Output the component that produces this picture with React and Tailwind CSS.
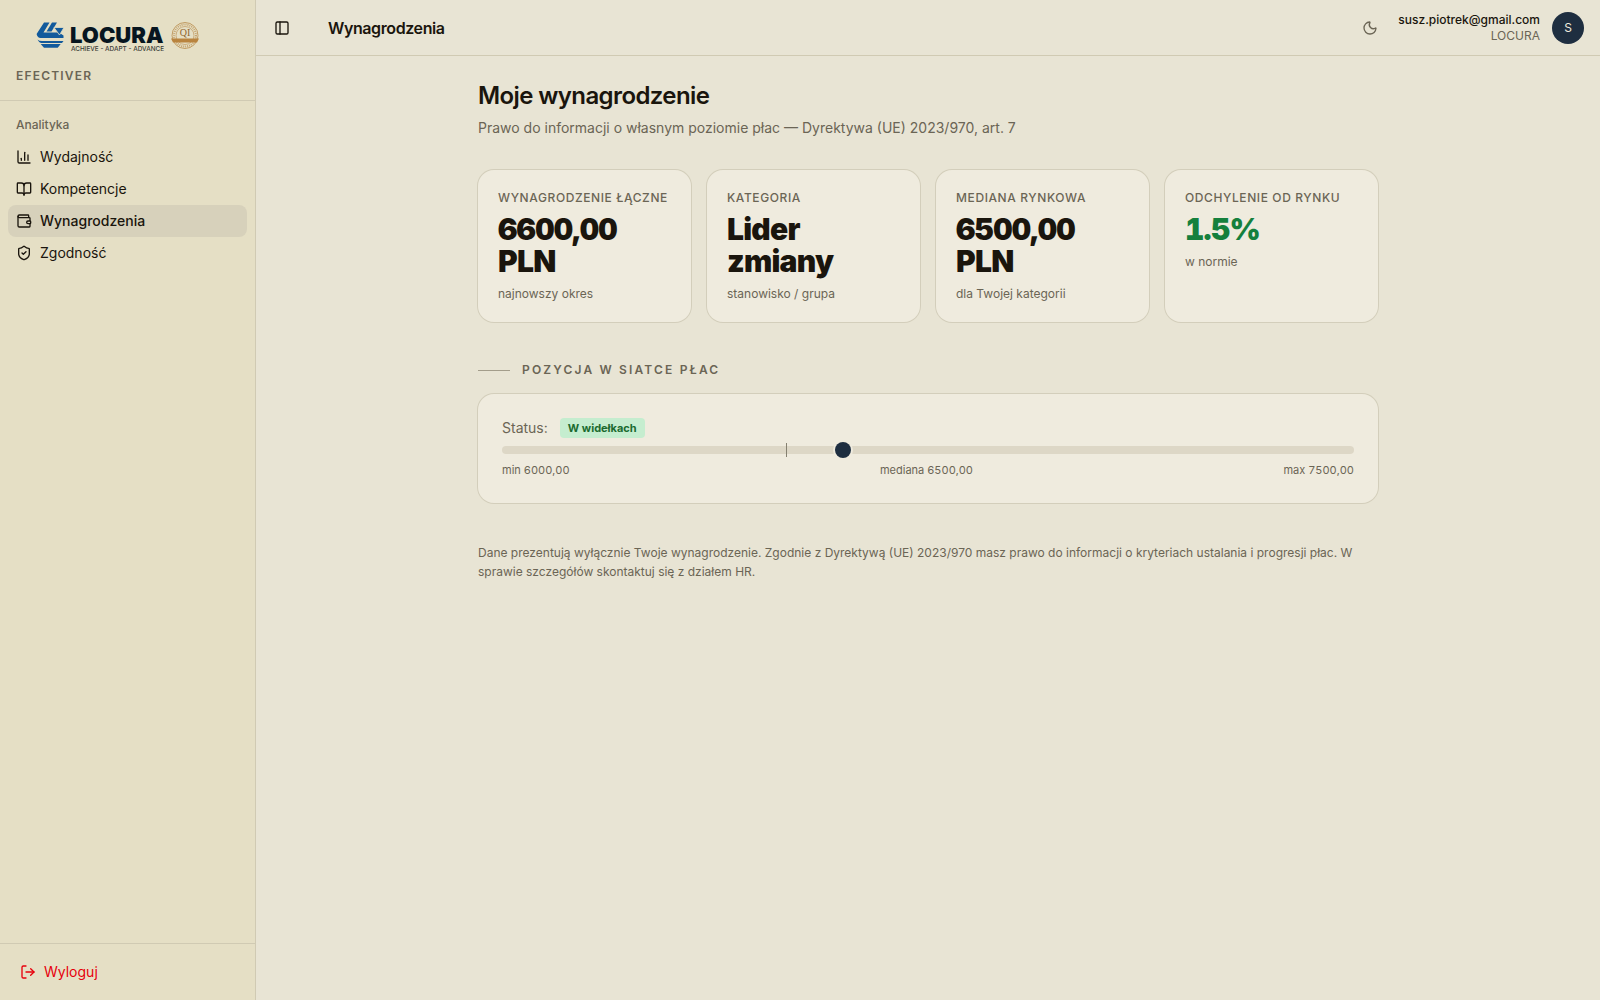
import {
  BookOpen,
  ChartColumn,
  LogOut,
  Moon,
  PanelLeft,
  ShieldCheck,
  Wallet,
} from "lucide-react";

const navItems = [
  { label: "Wydajność", icon: ChartColumn },
  { label: "Kompetencje", icon: BookOpen },
  { label: "Wynagrodzenia", icon: Wallet, active: true },
  { label: "Zgodność", icon: ShieldCheck },
];

const stats = [
  { label: "Wynagrodzenie łączne", value: "6600,00 PLN", hint: "najnowszy okres" },
  { label: "Kategoria", value: "Lider zmiany", hint: "stanowisko / grupa" },
  { label: "Mediana rynkowa", value: "6500,00 PLN", hint: "dla Twojej kategorii" },
  { label: "Odchylenie od rynku", value: "1.5%", hint: "w normie", positive: true },
];

const range = { min: 6000, median: 6500, max: 7500, current: 6600 };

const percent = (value) =>
  `${((value - range.min) / (range.max - range.min)) * 100}%`;

const format = (value) => value.toFixed(2).replace(".", ",");

const Logo = () => (
  <svg
    viewBox="0 0 164 32"
    className="w-[164px] h-8 overflow-visible"
    role="img"
    aria-label="Locura">
    <g fill="#125a9c">
      <path d="M8 2.5h5.5L7.5 12.5h15.5l4.5 3v2.5H4.5Q1.5 18 .6 14z" />
      <path d="M16 2.5h5L15.5 11.5h-5z" />
      <path d="M18 7.5h10L23.5 15z" stroke="#e5dfc5" strokeWidth="0.8" />
      <path d="M1.5 19.5Q3 21 6 21h21.5l-1.5 2H5Q2.5 22 1.5 19.5z" />
      <path d="M4.7 24h20l-3 3.8H8z" />
    </g>
    <text
      x="34"
      y="23"
      fontSize="22"
      fontWeight="900"
      fontFamily="Inter, sans-serif"
      fill="#07151f">
      LOCURA
    </text>
    <text
      x="35"
      y="31"
      fontSize="6.4"
      fontWeight="500"
      fontFamily="Inter, sans-serif"
      fill="#3b3d38">
      ACHIEVE - ADAPT - ADVANCE
    </text>
    <g fill="none" stroke="#b88a4a">
      <circle cx="149" cy="15.5" r="13" strokeWidth="0.8" />
      <circle
        cx="149"
        cy="15.5"
        r="11"
        strokeWidth="2"
        strokeDasharray="1 1"
        opacity="0.7"
      />
      <circle cx="149" cy="15.5" r="9" strokeWidth="0.6" />
    </g>
    <path d="M135 18.5h28l-2 4h-24z" fill="#b9843f" />
    <text
      x="149"
      y="16"
      fontSize="10"
      textAnchor="middle"
      fontFamily="Liberation Serif, serif"
      fill="#8f6530">
      QI
    </text>
  </svg>
);

const Sidebar = () => (
  <aside className="flex w-64 shrink-0 flex-col border-r border-[#d0cab3] bg-[#e5dfc5]">
    <div className="border-b border-[#d0cab3] px-4 pt-5 pb-4">
      <div className="pl-5">
        <Logo />
      </div>
      <div className="mt-4 text-xs font-semibold tracking-widest text-[#6b6555]">
        EFECTIVER
      </div>
    </div>
    <nav className="flex-1 p-2">
      <div className="flex h-8 items-center px-2 text-xs font-medium text-[#6b6555]">
        Analityka
      </div>
      <ul>
        {navItems.map(({ label, icon: Icon, active }) => (
          <li key={label}>
            <a
              href="#"
              aria-current={active ? "page" : undefined}
              className={
                active
                  ? "flex h-8 items-center gap-2 rounded-lg bg-[#d7d1bb] px-2 text-sm font-medium"
                  : "flex h-8 items-center gap-2 rounded-lg px-2 text-sm"
              }>
              <Icon className="size-4" />
              {label}
            </a>
          </li>
        ))}
      </ul>
    </nav>
    <div className="border-t border-[#d0cab3] p-2">
      <button className="flex h-10 w-full items-center gap-2 px-3 text-sm text-[#e7000b]">
        <LogOut className="size-4" />
        Wyloguj
      </button>
    </div>
  </aside>
);

const TopBar = () => (
  <header className="flex h-14 items-center border-b border-[#d0cab3] px-4">
    <button aria-label="Przełącz panel" className="p-[2px]">
      <PanelLeft className="size-4" />
    </button>
    <div className="ml-9 text-base font-semibold tracking-tight">
      Wynagrodzenia
    </div>
    <div className="ml-auto flex items-center">
      <button aria-label="Tryb ciemny" className="mr-5 text-[#6b6555]">
        <Moon className="size-4" />
      </button>
      <div className="mr-3 text-right text-xs">
        <div className="font-medium">susz.piotrek@gmail.com</div>
        <div className="text-[#6b6555]">LOCURA</div>
      </div>
      <div className="flex size-8 items-center justify-center rounded-full bg-[#1e2e40] text-xs text-[#efebde]">
        S
      </div>
    </div>
  </header>
);

const StatCard = ({ label, value, hint, positive }) => (
  <div className="rounded-2xl bg-[#efebde] p-5 ring-1 ring-[#d3cebb]">
    <div className="text-xs font-medium tracking-wider whitespace-nowrap text-[#6b6555] uppercase">
      {label}
    </div>
    <div
      className={
        positive
          ? "mt-[7px] text-3xl leading-8 font-black tracking-tight tabular-nums text-[#15803d]"
          : "mt-[7px] text-3xl leading-8 font-black tracking-tight tabular-nums"
      }>
      {value}
    </div>
    <div className="mt-2 text-xs leading-[17px] text-[#6b6555]">{hint}</div>
  </div>
);

const PayRange = () => (
  <section className="mt-10">
    <h2 className="flex items-center gap-3 text-xs font-semibold tracking-[0.18em] text-[#6b6555] uppercase">
      <span className="h-px w-8 bg-[#a39d8b]" />
      Pozycja w siatce płac
    </h2>
    <div className="mt-4 rounded-2xl bg-[#efebde] p-6 ring-1 ring-[#d3cebb]">
      <div className="flex items-center gap-3 text-sm text-[#6b6555]">
        Status:
        <span className="rounded bg-[#c5edcf] px-2 text-[11px] leading-5 font-bold text-[#1b6b2f]">
          W widełkach
        </span>
      </div>
      <div className="relative mt-2 h-2 rounded bg-[#ddd7c6]">
        <span
          className="absolute -top-[3px] h-[14px] w-px bg-[#858070]"
          style={{ left: percent(range.median) }}
        />
        <span
          className="absolute -top-1 size-4 -translate-x-1/2 rounded-full bg-[#1e2e40] ring-2 ring-[#efebde]"
          style={{ left: percent(range.current) }}
        />
      </div>
      <div className="mt-2 flex justify-between text-[11px] leading-[17px] tabular-nums text-[#6b6555]">
        <span>min {format(range.min)}</span>
        <span>mediana {format(range.median)}</span>
        <span>max {format(range.max)}</span>
      </div>
    </div>
  </section>
);

const App = () => {
  return (
    <div className="flex min-h-screen bg-[#e8e4d4] font-[Inter,sans-serif] text-[#1a150d]">
      <Sidebar />
      <div className="min-w-0 flex-1">
        <TopBar />
        <main className="mx-auto max-w-[900px] pt-6">
          <h1 className="text-2xl font-semibold tracking-tight">
            Moje wynagrodzenie
          </h1>
          <p className="mt-1.5 text-sm text-[#6b6555]">
            Prawo do informacji o własnym poziomie płac — Dyrektywa (UE)
            2023/970, art. 7
          </p>
          <div className="mt-8 grid grid-cols-4 gap-4">
            {stats.map((stat) => (
              <StatCard key={stat.label} {...stat} />
            ))}
          </div>
          <PayRange />
          <p className="mt-10 text-xs leading-[19px] text-[#6b6555]">
            Dane prezentują wyłącznie Twoje wynagrodzenie. Zgodnie z Dyrektywą
            (UE) 2023/970 masz prawo do informacji o kryteriach ustalania i
            progresji płac. W sprawie szczegółów skontaktuj się z działem HR.
          </p>
        </main>
      </div>
    </div>
  );
};

export default App;
